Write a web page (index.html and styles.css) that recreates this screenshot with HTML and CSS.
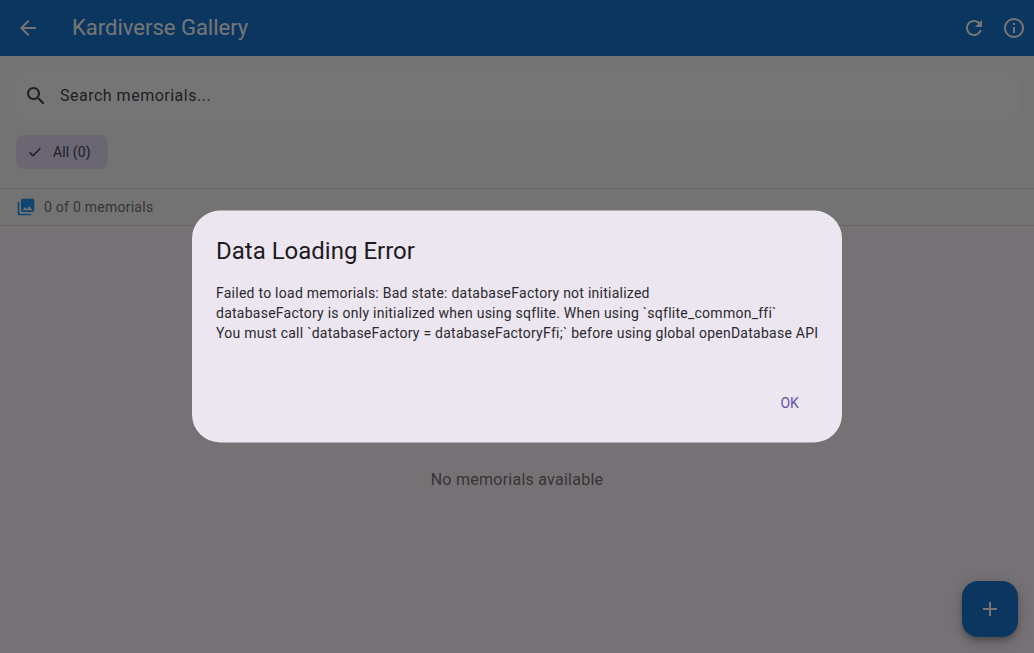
FILE: index.html
```html
<!DOCTYPE html>
<html lang="en">
<head>
<meta charset="utf-8">
<title>Kardiverse Gallery</title>
<link rel="stylesheet" href="styles.css">
</head>
<body>
<div class="app">
  <header class="app-bar">
    <svg class="icon back" viewBox="0 0 24 24"><path d="M20 11H7.83l5.59-5.59L12 4l-8 8 8 8 1.41-1.41L7.83 13H20v-2z"/></svg>
    <h1 class="app-title">Kardiverse Gallery</h1>
    <svg class="icon" viewBox="0 0 24 24"><path d="M17.65 6.35C16.2 4.9 14.21 4 12 4c-4.42 0-7.99 3.58-7.99 8s3.57 8 7.99 8c3.73 0 6.84-2.55 7.73-6h-2.08c-.82 2.33-3.04 4-5.65 4-3.31 0-6-2.69-6-6s2.69-6 6-6c1.66 0 3.14.69 4.22 1.78L13 11h7V4l-2.35 2.35z"/></svg>
    <svg class="icon" viewBox="0 0 24 24"><path d="M11 7h2v2h-2zm0 4h2v6h-2zm1-9C6.48 2 2 6.48 2 12s4.48 10 10 10 10-4.48 10-10S17.52 2 12 2zm0 18c-4.41 0-8-3.59-8-8s3.59-8 8-8 8 3.59 8 8-3.59 8-8 8z"/></svg>
  </header>
  <section class="filters">
    <div class="search">
      <svg class="icon" viewBox="0 0 24 24"><path d="M15.5 14h-.79l-.28-.27C15.41 12.59 16 11.11 16 9.5 16 5.91 13.09 3 9.5 3S3 5.91 3 9.5 5.91 16 9.5 16c1.61 0 3.09-.59 4.23-1.57l.27.28v.79l5 4.99L20.49 19l-4.99-5zm-6 0C7.01 14 5 11.99 5 9.5S7.01 5 9.5 5 14 7.01 14 9.5 11.99 14 9.5 14z"/></svg>
      <span class="search-hint">Search memorials...</span>
    </div>
    <div class="chip">
      <svg class="chip-check" viewBox="0 0 18 18"><path d="M3.7 9.4 7 12.7 14.3 5.3"/></svg>
      <span>All (0)</span>
    </div>
  </section>
  <section class="count">
    <svg class="count-icon" viewBox="0 0 24 24"><path d="M22 16V4c0-1.1-.9-2-2-2H8c-1.1 0-2 .9-2 2v12c0 1.1.9 2 2 2h12c1.1 0 2-.9 2-2zm-11-4l2.03 2.71L16 11l4 5H8l3-4zM2 6v14c0 1.1.9 2 2 2h14v-2H4V6H2z"/></svg>
    <span>0 of 0 memorials</span>
  </section>
  <main class="empty"><p class="empty-text">No memorials available</p></main>
</div>
<button class="fab"><svg class="icon" viewBox="0 0 24 24"><path d="M19 13h-6v6h-2v-6H5v-2h6V5h2v6h6v2z"/></svg></button>
<div class="scrim">
  <div class="dialog">
    <h2 class="dialog-title">Data Loading Error</h2>
    <p class="dialog-text">Failed to load memorials: Bad state: databaseFactory not initialized<br>databaseFactory is only initialized when using sqflite. When using `sqflite_common_ffi`<br>You must call `databaseFactory = databaseFactoryFfi;` before using global openDatabase API</p>
    <div class="dialog-actions"><button class="ok">OK</button></div>
  </div>
</div>
</body>
</html>
```
FILE: styles.css
```css
* { box-sizing: border-box; }
body {
  margin: 0;
  height: 100vh;
  overflow: hidden;
  font-family: Roboto, sans-serif;
  color: #1d1b20;
}
h1, h2, p { margin: 0; font-weight: 400; }
button { border: 0; font-family: inherit; }
svg { display: block; flex: none; fill: currentColor; }
.icon { width: 24px; height: 24px; }
.app {
  display: flex;
  flex-direction: column;
  height: 100vh;
  background: #fff7fe;
}
.app-bar {
  display: flex;
  align-items: center;
  gap: 16px;
  height: 56px;
  padding: 0 8px 0 16px;
  background: #1976d2;
  color: #fff;
}
.app-title {
  flex: 1;
  margin-left: 16px;
  font-size: 22px;
  line-height: 28px;
}
.filters {
  height: 132px;
  padding: 16px 16px 0;
  background: #fafafa;
}
.search {
  display: flex;
  align-items: center;
  gap: 12px;
  height: 48px;
  padding: 0 8px;
  border-radius: 12px;
  background: #fff;
  color: #49454f;
  font-size: 16px;
  letter-spacing: 0.5px;
}
.search-hint { padding-bottom: 2px; }
.chip {
  display: flex;
  align-items: center;
  gap: 9px;
  width: 92px;
  height: 34px;
  margin-top: 15px;
  padding-left: 10px;
  border-radius: 8px;
  background: #e8def8;
  color: #4a4458;
  font-size: 14px;
  letter-spacing: 0.1px;
}
.chip-check {
  width: 18px;
  height: 18px;
  fill: none;
  stroke: currentColor;
  stroke-width: 1.6;
}
.count {
  display: flex;
  align-items: center;
  gap: 8px;
  height: 38px;
  padding: 0 16px;
  border-top: 1px solid #e0e0e0;
  border-bottom: 1px solid #e0e0e0;
  background: #fafafa;
  color: #757575;
  font-size: 14px;
  letter-spacing: 0.25px;
}
.count-icon { width: 20px; height: 20px; color: #2196f3; }
.empty {
  flex: 1;
  display: flex;
  justify-content: center;
  padding-top: 242px;
}
.empty-text {
  font-size: 16px;
  line-height: 24px;
  letter-spacing: 0.25px;
  color: #757575;
}
.fab {
  position: absolute;
  right: 16px;
  bottom: 16px;
  display: flex;
  align-items: center;
  justify-content: center;
  width: 56px;
  height: 56px;
  border-radius: 16px;
  background: #1976d2;
  color: #fff;
  box-shadow: 0 3px 5px -1px rgba(0,0,0,.2), 0 6px 10px rgba(0,0,0,.14), 0 1px 18px rgba(0,0,0,.12);
}
.scrim {
  position: absolute;
  inset: 0;
  display: flex;
  align-items: center;
  justify-content: center;
  background: rgba(0,0,0,.54);
}
.dialog {
  position: relative;
  z-index: 0;
  width: 650px;
  height: 232px;
  padding: 24px;
}
/* surface centred on the half pixel, behind crisp text */
.dialog::before {
  content: "";
  position: absolute;
  inset: 0;
  z-index: -1;
  border-radius: 28px;
  background: #ece6f0;
  transform: translateY(-0.5px);
}
.dialog-title {
  font-size: 24px;
  line-height: 32px;
}
.dialog-text {
  margin-top: 16px;
  font-size: 14px;
  line-height: 20px;
  letter-spacing: 0.25px;
  white-space: nowrap;
  color: #2b292e;
}
.dialog-actions {
  display: flex;
  justify-content: flex-end;
  margin-top: 40px;
}
.ok {
  height: 40px;
  padding: 0 19px;
  background: none;
  color: #6750a4;
  font-size: 14px;
  letter-spacing: 0.1px;
}
```
